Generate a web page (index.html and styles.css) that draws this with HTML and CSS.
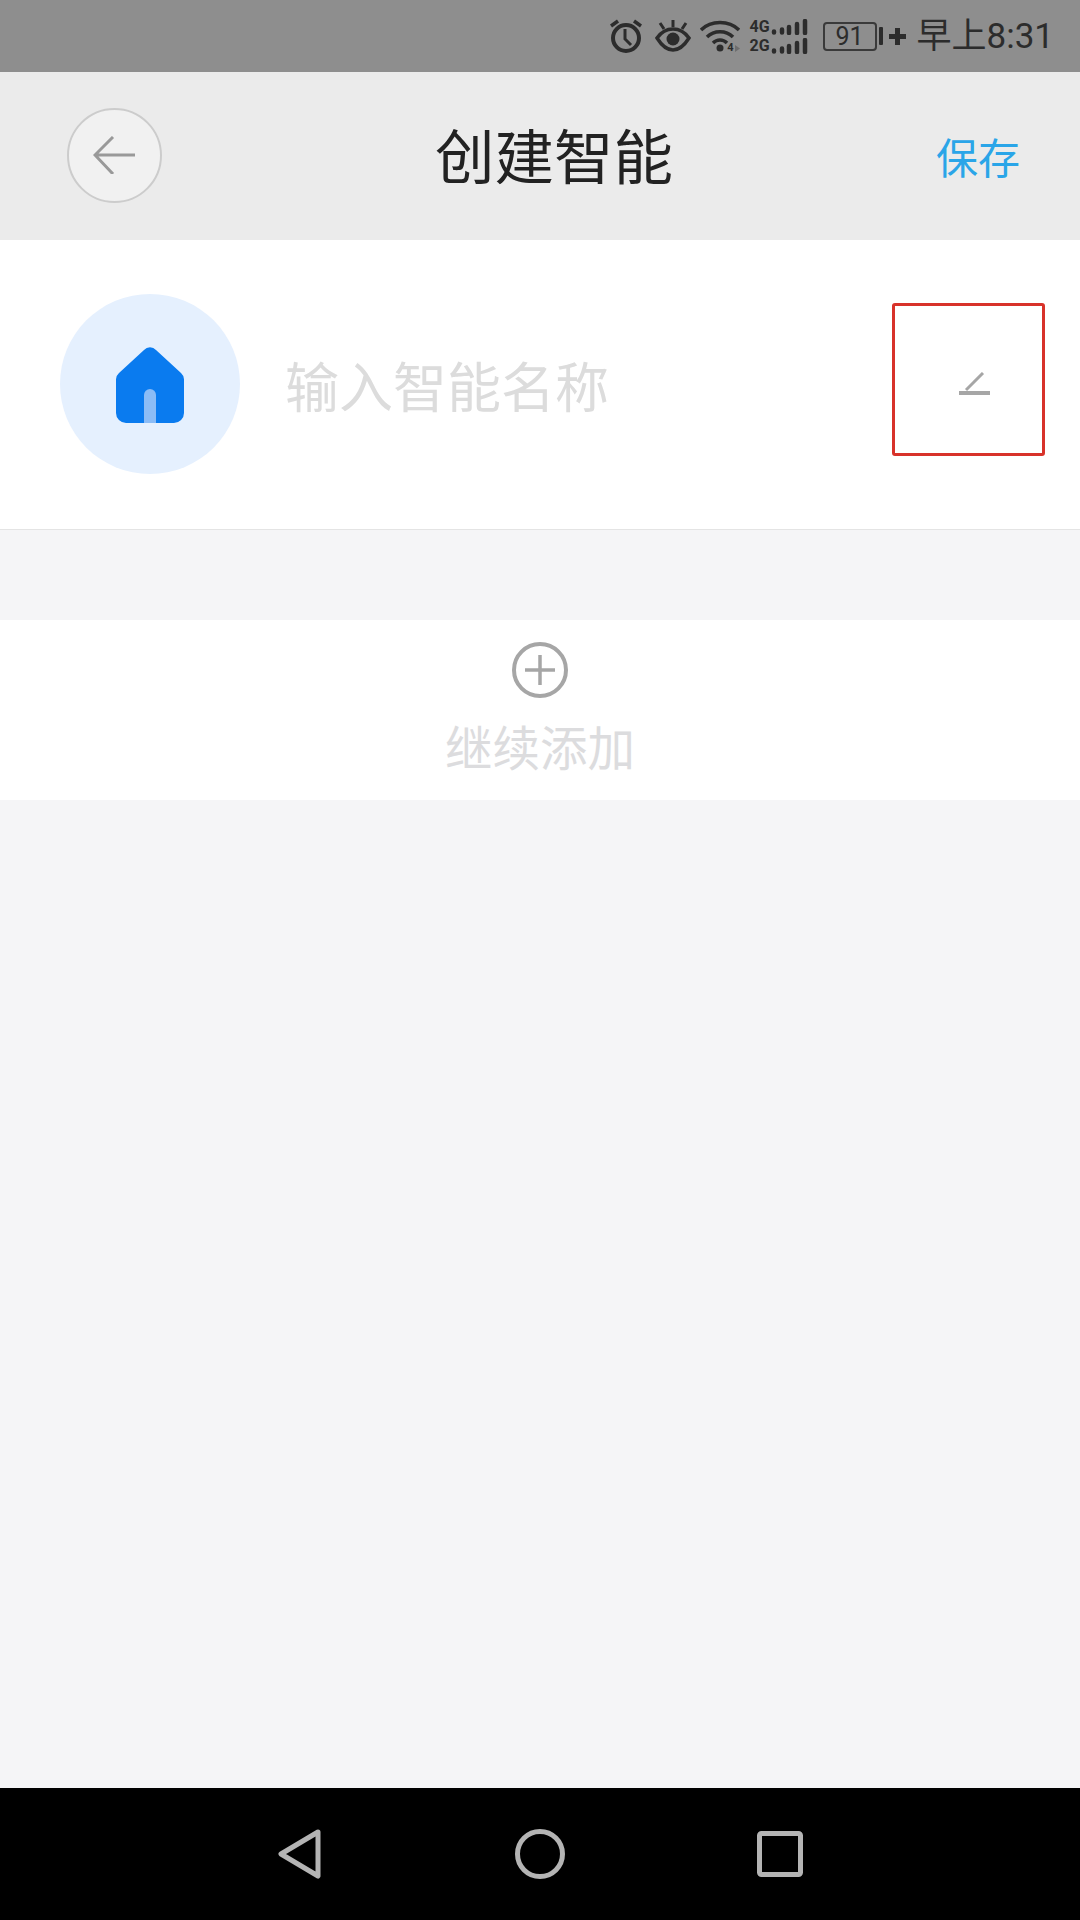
FILE: index.html
```html
<!DOCTYPE html>
<html lang="zh-CN">
<head>
  <meta charset="UTF-8">
  <meta name="viewport" content="width=device-width, initial-scale=1.0">
  <title>创建智能</title>
  <link rel="stylesheet" href="styles.css">
</head>
<body>
  <div class="screen">
    <div class="status-bar">
      <svg class="icon-alarm" width="32" height="34" viewBox="0 0 32 34">
        <circle cx="16" cy="19" r="13" fill="none" stroke="#2c2c2c" stroke-width="4"/>
        <path d="M15 10v10l6 6" fill="none" stroke="#2c2c2c" stroke-width="3"/>
        <path d="M1 7l7-5M31 7l-7-5" fill="none" stroke="#2c2c2c" stroke-width="3.500"/>
      </svg>
      <svg class="icon-eye" width="36" height="32" viewBox="0 0 36 32">
        <path d="M2 18C7 11 12 9 18 9s11 2 16 9c-5 8-10 12-16 12S7 26 2 18z" fill="none" stroke="#2c2c2c" stroke-width="3.500"/>
        <circle cx="18" cy="19" r="6.500" fill="#2c2c2c"/>
        <path d="M18 0v7M5 3l4 6M31 3l-4 6" fill="none" stroke="#2c2c2c" stroke-width="3"/>
      </svg>
      <div class="wifi">
        <svg width="40" height="34" viewBox="0 0 40 34">
          <path d="M1 11C11 1 29 1 39 11M7 18c7-7 19-7 26 0M13 24c4-4 10-4 14 0" fill="none" stroke="#2c2c2c" stroke-width="3.500"/>
          <circle cx="20" cy="29" r="3.500" fill="#2c2c2c"/>
          <path d="M35 26v7l5-3.500z" fill="#6e6e6e"/>
        </svg>
        <span class="wifi-num">4</span>
      </div>
      <div class="signal">
        <div class="signal-row">
          <span class="net-label">4G</span>
          <svg width="38" height="16" viewBox="0 0 38 16">
            <path d="M4 12.500v1M12 10.500v3M19 8v6M27 5v9M35 2v12" fill="none" stroke="#2c2c2c" stroke-width="4.500" stroke-linecap="round"/>
          </svg>
        </div>
        <div class="signal-row">
          <span class="net-label">2G</span>
          <svg width="38" height="16" viewBox="0 0 38 16">
            <path d="M4 12.500v1M12 10.500v3M19 8v6M27 5v9M35 2v12" fill="none" stroke="#2c2c2c" stroke-width="4.500" stroke-linecap="round"/>
          </svg>
        </div>
      </div>
      <div class="battery"><span class="battery-level">91</span></div>
      <div class="battery-nub"></div>
      <svg class="icon-charge" width="17" height="17" viewBox="0 0 17 17">
        <path d="M0 8.500h17M8.500 0v17" fill="none" stroke="#2c2c2c" stroke-width="5"/>
      </svg>
      <span class="clock">早上8:31</span>
    </div>

    <div class="title-bar">
      <div class="back-btn">
        <svg width="42" height="38" viewBox="0 0 42 38">
          <path d="M20 1L2 19l18 19M2 19h40" fill="none" stroke="#999" stroke-width="3"/>
        </svg>
      </div>
      <div class="title">创建智能</div>
      <div class="save">保存</div>
    </div>

    <div class="name-card">
      <div class="avatar">
        <svg width="68" height="76" viewBox="0 0 68 76">
          <path d="M28 3a8 8 0 0 1 12 0L65 26a9 9 0 0 1 3 7v33a10 10 0 0 1-10 10H10A10 10 0 0 1 0 66V33a9 9 0 0 1 3-7z" fill="#0a7bef"/>
          <path d="M28 76V48a6 6 0 0 1 12 0v28z" fill="#8bbcf6"/>
        </svg>
      </div>
      <div class="name-input">输入智能名称</div>
      <div class="edit-box">
        <svg width="32" height="24" viewBox="0 0 32 24">
          <path d="M7 18L24 1" fill="none" stroke="#a6a6a6" stroke-width="3"/>
          <path d="M0 21h31" fill="none" stroke="#a6a6a6" stroke-width="4"/>
        </svg>
      </div>
    </div>

    <div class="add-card">
      <svg width="56" height="56" viewBox="0 0 56 56">
        <circle cx="28" cy="28" r="26" fill="none" stroke="#a6a6a6" stroke-width="4"/>
        <path d="M13 28h30M28 13v30" fill="none" stroke="#a6a6a6" stroke-width="3.500"/>
      </svg>
      <div class="add-label">继续添加</div>
    </div>

    <div class="spacer"></div>

    <div class="nav-bar">
      <svg width="44" height="50" viewBox="0 0 44 50">
        <path d="M40 3L3 25l37 22z" fill="none" stroke="#b4b4b4" stroke-width="5" stroke-linejoin="round"/>
      </svg>
      <svg width="50" height="50" viewBox="0 0 50 50">
        <circle cx="25" cy="25" r="22.500" fill="none" stroke="#b4b4b4" stroke-width="5"/>
      </svg>
      <svg width="46" height="46" viewBox="0 0 46 46">
        <rect x="2.500" y="2.500" width="41" height="41" rx="2" fill="none" stroke="#b4b4b4" stroke-width="5"/>
      </svg>
    </div>
  </div>
</body>
</html>
```

FILE: styles.css
```css
* {
  box-sizing: border-box;
}

body {
  margin: 0;
  font-family: "Noto Sans CJK SC", "Noto Sans", sans-serif;
  background-color: #f5f5f7;
}

.screen {
  display: flex;
  flex-direction: column;
  width: 1080px;
  height: 1920px;
  overflow: hidden;
}

/* status bar */
.status-bar {
  display: flex;
  align-items: center;
  justify-content: flex-end;
  flex-shrink: 0;
  height: 72px;
  padding-right: 26px;
  background-color: #8e8e8e;
  color: #2c2c2c;
}

.icon-alarm {
  margin-right: 13px;
}

.icon-eye {
  margin-right: 9px;
}

.wifi {
  position: relative;
  display: flex;
  width: 40px;
  height: 34px;
  margin-right: 10px;
}

.wifi-num {
  position: absolute;
  right: 6px;
  bottom: 0;
  font-family: Roboto, sans-serif;
  font-size: 11px;
  font-weight: 700;
  line-height: 1;
}

.signal {
  display: flex;
  flex-direction: column;
  gap: 3px;
  width: 58px;
  margin-right: 15px;
}

.signal-row {
  display: flex;
  align-items: center;
  justify-content: space-between;
  height: 16px;
}

.net-label {
  width: 20px;
  font-family: Roboto, sans-serif;
  font-size: 16px;
  font-weight: 700;
  line-height: 16px;
  white-space: nowrap;
}

.battery {
  display: flex;
  align-items: center;
  justify-content: center;
  width: 54px;
  height: 29px;
  border: 2px solid #3a3a3a;
  border-radius: 4px;
}

.battery-level {
  font-family: Roboto, sans-serif;
  font-size: 25px;
  line-height: 1;
}

.battery-nub {
  width: 4px;
  height: 18px;
  margin: 0 6px 0 2px;
  border-radius: 1px;
  background-color: #2c2c2c;
}

.clock {
  margin-left: 11px;
  font-family: Roboto, "Noto Sans CJK SC", sans-serif;
  font-size: 35px;
  line-height: 1;
}

/* title bar */
.title-bar {
  display: flex;
  align-items: center;
  flex-shrink: 0;
  height: 168px;
  padding: 0 60px 2px 67px;
  background-color: #ebebeb;
}

.back-btn {
  display: flex;
  align-items: center;
  justify-content: center;
  flex-shrink: 0;
  width: 95px;
  height: 95px;
  padding-right: 1px;
  border: 2px solid #ccc;
  border-radius: 50%;
  background-color: #f1f1f1;
}

.title {
  margin-left: 273px;
  padding-bottom: 2px;
  font-size: 59.500px;
  line-height: 1;
  color: #222;
}

.save {
  margin-left: auto;
  margin-top: 2px;
  font-size: 42px;
  line-height: 1;
  color: #2aa5e8;
}

/* name row */
.name-card {
  display: flex;
  align-items: center;
  flex-shrink: 0;
  height: 290px;
  padding: 0 35px 0 60px;
  border-bottom: 1px solid #e4e4e4;
  background-color: #fff;
}

.avatar {
  display: flex;
  align-items: center;
  justify-content: center;
  flex-shrink: 0;
  width: 180px;
  height: 180px;
  margin-bottom: 2px;
  padding-top: 2px;
  border-radius: 50%;
  background-color: #e5f0fe;
}

.name-input {
  margin-left: 45px;
  font-size: 54px;
  line-height: 1;
  color: #dcdcdc;
}

.edit-box {
  display: flex;
  align-items: center;
  justify-content: center;
  width: 153px;
  height: 153px;
  margin-left: auto;
  margin-bottom: 10px;
  padding: 8px 0 0 12px;
  border: 3px solid #d8322a;
  border-radius: 3px;
}

/* add row */
.add-card {
  display: flex;
  flex-direction: column;
  align-items: center;
  flex-shrink: 0;
  height: 180px;
  margin-top: 90px;
  padding-top: 22px;
  background-color: #fff;
}

.add-label {
  margin-top: 24px;
  font-size: 47.500px;
  line-height: 1;
  color: #dcdcde;
}

.spacer {
  flex: 1;
}

/* android nav */
.nav-bar {
  display: flex;
  align-items: center;
  justify-content: space-between;
  flex-shrink: 0;
  height: 132px;
  padding: 0 277px 0 278px;
  background-color: #000;
}
```
